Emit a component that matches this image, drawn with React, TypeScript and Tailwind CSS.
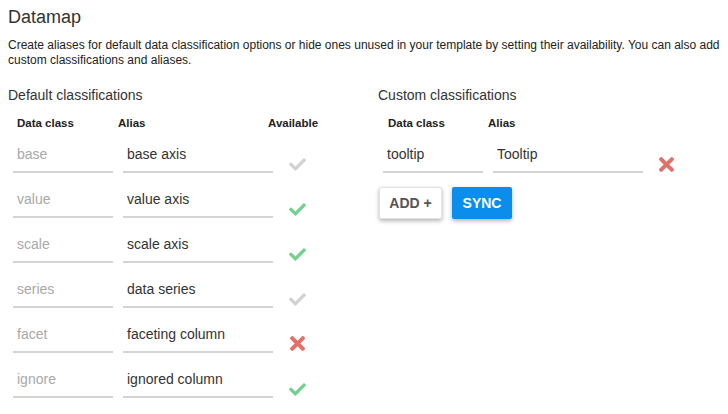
import React from "react";

function Check({ color }: { color: string }) {
  return (
    <svg width="17" height="13" viewBox="0 65 512 382" fill={color}>
      <path d="M173.898 439.404l-166.4-166.4c-9.997-9.997-9.997-26.206 0-36.204l36.203-36.204c9.997-9.998 26.207-9.998 36.204 0L192 312.69 432.095 72.596c9.997-9.997 26.207-9.997 36.204 0l36.203 36.204c9.997 9.997 9.997 26.206 0 36.204l-294.4 294.401c-9.998 9.997-26.207 9.997-36.204-.001z" />
    </svg>
  );
}

function Times() {
  return (
    <svg width="15" height="15" viewBox="0 80 352 352" fill="#e3716a">
      <path d="M242.72 256l100.07-100.07c12.28-12.28 12.28-32.19 0-44.48l-22.24-22.24c-12.28-12.28-32.19-12.28-44.48 0L176 189.28 75.93 89.21c-12.28-12.28-32.19-12.28-44.48 0L9.21 111.450c-12.28 12.28-12.28 32.19 0 44.48L109.28 256 9.21 356.07c-12.28 12.280-12.28 32.19 0 44.48l22.24 22.24c12.28 12.28 32.2 12.28 44.48 0L176 322.72l100.07 100.07c12.28 12.28 32.2 12.28 44.48 0l22.24-22.240c12.28-12.28 12.28-32.19 0-44.48L242.72 256z" />
    </svg>
  );
}

type Row = { cls: string; alias: string; state: "off" | "on" | "x" };

const rows: Row[] = [
  { cls: "base", alias: "base axis", state: "off" },
  { cls: "value", alias: "value axis", state: "on" },
  { cls: "scale", alias: "scale axis", state: "on" },
  { cls: "series", alias: "data series", state: "off" },
  { cls: "facet", alias: "faceting column", state: "x" },
  { cls: "ignore", alias: "ignored column", state: "on" },
];

function Field({ w, value, placeholder }: { w: string; value?: string; placeholder?: string }) {
  return (
    <input
      readOnly
      value={value ?? ""}
      placeholder={placeholder}
      className={`${w} h-[34px] border-0 border-b-2 border-[#d4d4d4] bg-transparent px-[4px] pb-[2px] text-[14px] text-[#333] outline-none placeholder:text-[#a9a9a9] font-['Liberation_Sans',Arial,sans-serif]`}
    />
  );
}

export default function App() {
  return (
    <div className="min-h-[414px] bg-white px-[8px] pt-[6px] font-['Liberation_Sans',Arial,sans-serif] text-[#333]">
      <h1 className="text-[18px] leading-[22px]">Datamap</h1>
      <p className="mt-[10px] whitespace-nowrap text-[12px] leading-[15px] text-[#222]">
        Create aliases for default data classification options or hide ones unused in your template by setting their availability. You can also add
        <br />
        custom classifications and aliases.
      </p>
      <div className="mt-[18px] flex">
        <div className="w-[370px]">
          <h2 className="text-[14px] leading-[18px]">Default classifications</h2>
          <div className="mt-[11px] ml-[5px] flex text-[11.5px] font-bold leading-[16px] text-[#222]">
            <div className="w-[100px] pl-[4px]">Data class</div>
            <div className="ml-[5px] w-[150px]">Alias</div>
            <div>Available</div>
          </div>
          <div className="mt-[8px] ml-[5px] flex flex-col gap-[11px]">
            {rows.map((r) => (
              <div key={r.cls} className="flex items-end">
                <Field w="w-[100px]" placeholder={r.cls} />
                <div className="ml-[10px]">
                  <Field w="w-[150px]" value={r.alias} />
                </div>
                <div className="ml-[16px] mb-[2px] flex w-[17px] justify-center">
                  {r.state === "x" ? (
                    <Times />
                  ) : (
                    <Check color={r.state === "on" ? "#72d18c" : "#d2d2d2"} />
                  )}
                </div>
              </div>
            ))}
          </div>
        </div>
        <div className="flex-1">
          <h2 className="text-[14px] leading-[18px]">Custom classifications</h2>
          <div className="mt-[11px] ml-[5px] flex text-[11.5px] font-bold leading-[16px] text-[#222]">
            <div className="w-[100px] pl-[5px]">Data class</div>
            <div className="ml-[5px]">Alias</div>
          </div>
          <div className="mt-[8px] ml-[5px] flex items-end">
            <Field w="w-[100px]" value="tooltip" />
            <div className="ml-[10px]">
              <Field w="w-[150px]" value="Tooltip" />
            </div>
            <div className="ml-[16px] mb-[1px]">
              <Times />
            </div>
          </div>
          <div className="mt-[14px] ml-[1px] flex gap-[10px]">
            <button className="h-[32px] w-[63px] rounded-[2px] border border-[#e2e2e2] bg-white text-[14px] font-bold text-[#555] shadow-[0_2px_4px_rgba(0,0,0,0.3)]">
              ADD +
            </button>
            <button className="h-[32px] w-[60px] rounded-[2px] bg-[#0b8dec] text-[14px] font-bold text-white shadow-[0_2px_4px_rgba(0,0,0,0.3)]">
              SYNC
            </button>
          </div>
        </div>
      </div>
    </div>
  );
}
